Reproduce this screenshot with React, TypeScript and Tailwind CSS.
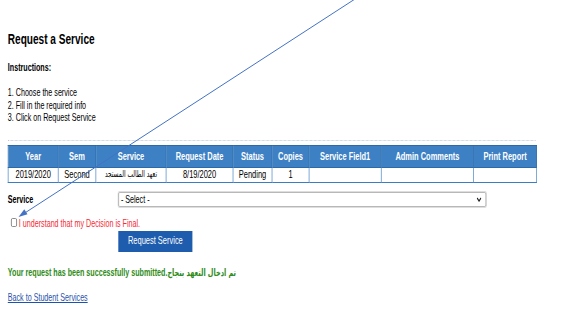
const columns = [
  { label: "Year", w: "w-[77px]" },
  { label: "Sem", w: "w-[58px]" },
  { label: "Service", w: "w-[108px]" },
  { label: "Request Date", w: "w-[103px]" },
  { label: "Status", w: "w-[60px]" },
  { label: "Copies", w: "w-[57px]" },
  { label: "Service Field1", w: "w-[111px]" },
  { label: "Admin Comments", w: "w-[142px]" },
  { label: "Print Report", w: "w-[97px]" },
];

const row = ["2019/2020", "Second", "تعهد الطالب المستجد", "8/19/2020", "Pending", "1", "", "", ""];

const App = () => {
  return (
    <div className="relative w-[562px] h-[316px] overflow-hidden bg-white">
      {/* page content, squeezed horizontally like the screenshot */}
      <div className="w-[865px] origin-top-left scale-x-[0.65] pl-[12px] pt-[30px] font-['Liberation_Sans',Arial,sans-serif] text-[11px] text-black">
        <h2 className="text-[15.5px] font-bold leading-[18px]">Request a Service</h2>

        <p className="mt-[13px] font-bold leading-[13px]">Instructions:</p>

        <div className="mt-[12px] leading-[12.5px]">
          <div>1. Choose the service</div>
          <div>2. Fill in the required info</div>
          <div>3. Click on Request Service</div>
        </div>

        <div className="mt-[16px] w-[812px] border-t border-dotted border-[#b7c8da]" />

        <table className="mt-[4px] w-[812px] border-collapse table-fixed">
          <thead>
            <tr className="h-[22px] bg-[#3d80c4]">
              {columns.map((c) => (
                <th
                  key={c.label}
                  className={`${c.w} border border-[#2c69a6] p-0 text-center text-[11.5px] font-bold text-white leading-[13px]`}
                >
                  {c.label}
                </th>
              ))}
            </tr>
          </thead>
          <tbody>
            <tr className="h-[15px]">
              {row.map((v, i) => (
                <td
                  key={i}
                  className={`border border-[#3b7dc3] p-0 text-center leading-[13px] ${i === 2 ? "text-[9px] font-['DejaVu_Sans',sans-serif]" : "text-[11.5px]"}`}
                >
                  {v}
                </td>
              ))}
            </tr>
          </tbody>
        </table>

        {/* service selector */}
        <div className="mt-[9px] flex items-center">
          <span className="w-[170px] font-bold leading-[13px]">Service</span>
          <div className="flex h-[15px] w-[566px] items-center justify-between rounded-[2px] border border-[#a9a9a9] pl-[3px] pr-[6px] leading-[13px] shadow-[0_0_0_1px_#dedede]">
            <span>- Select -</span>
            <svg width="8" height="5" viewBox="0 0 8 5">
              <path d="M1 1l3 3 3-3" fill="none" stroke="#222" strokeWidth="1.6" />
            </svg>
          </div>
        </div>

        <label className="mt-[10px] flex h-[12px] items-center">
          <span className="ml-[5px] h-[9px] w-[9px] rounded-[2px] border border-[#767676] bg-white" />
          <span className="ml-[3px] leading-[12px] text-[#f52a35]">I understand that my Decision is Final.</span>
        </label>

        <button className="ml-[170px] mt-[2px] h-[21px] w-[114px] bg-[#1e5cae] text-[11.5px] text-white">
          Request Service
        </button>

        <p className="mt-[14px] font-bold leading-[13px] text-[#2e8b17]">
          Your request has been successfully submitted.
          <span className="font-['DejaVu_Sans',sans-serif] text-[10px]">تم ادخال التعهد بنجاح</span>
        </p>

        <a href="#" className="mt-[12px] block w-fit leading-[13px] text-[#1f52ad] underline">
          Back to Student Services
        </a>
      </div>

      {/* annotation arrow drawn over the screenshot */}
      <svg className="absolute inset-0 pointer-events-none" width="562" height="316" viewBox="0 0 562 316">
        <line x1="355" y1="-1" x2="24" y2="213.5" stroke="#4472c4" strokeWidth="1" />
        <polygon points="18.5,217 27.5,214.3 24.3,209.2" fill="#4472c4" />
      </svg>
    </div>
  );
};

export default App;
